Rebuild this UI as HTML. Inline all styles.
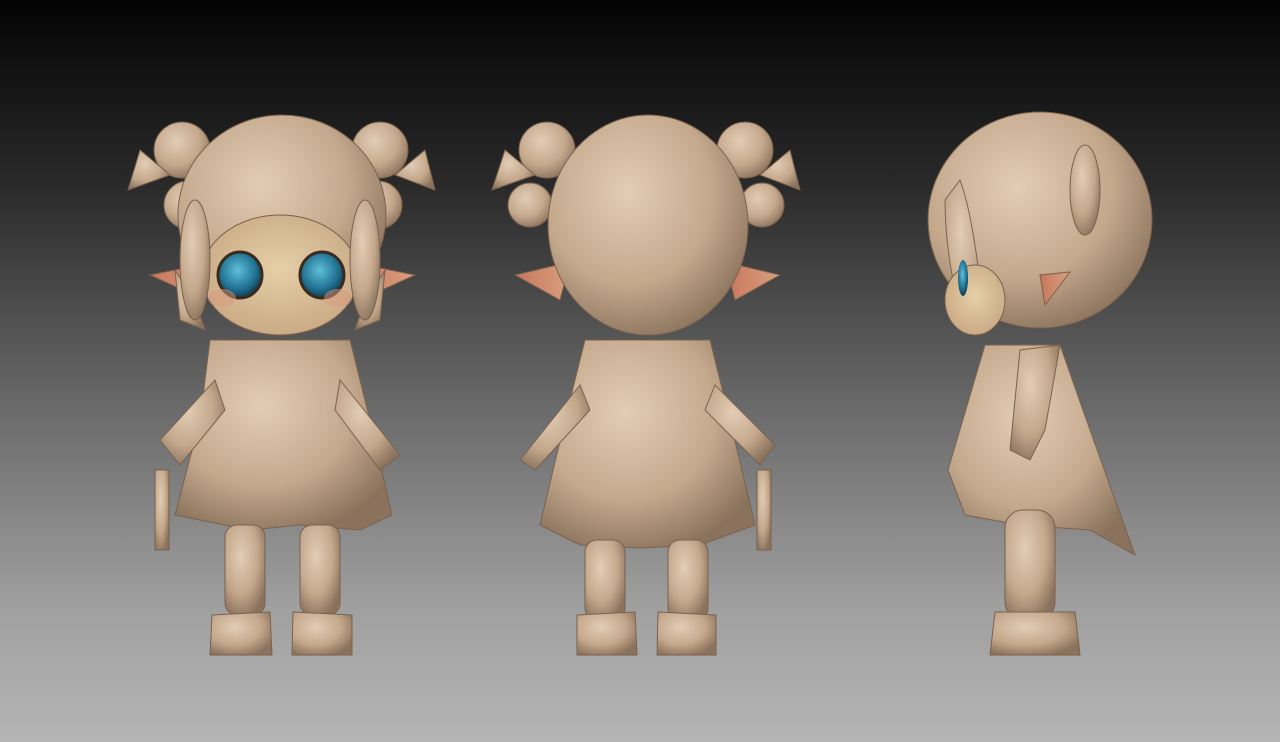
<!DOCTYPE html>
<html><head><meta charset="utf-8"><style>
html,body{margin:0;padding:0;width:1280px;height:742px;overflow:hidden}
body{background:linear-gradient(#030303 0%,#2a2a2a 25%,#6a6a6a 55%,#a0a0a0 82%,#b4b4b4 100%)}
svg{position:absolute;left:0;top:0}
</style></head><body>
<svg width="1280" height="742" viewBox="0 0 1280 742">
<defs>
<radialGradient id="sk" cx="40%" cy="35%" r="70%"><stop offset="0" stop-color="#e2cdb5"/><stop offset=".6" stop-color="#c4a88c"/><stop offset="1" stop-color="#8a725c"/></radialGradient>
<radialGradient id="face" cx="50%" cy="45%" r="60%"><stop offset="0" stop-color="#e6cfa8"/><stop offset="1" stop-color="#c7a882"/></radialGradient>
<radialGradient id="eye" cx="45%" cy="40%" r="60%"><stop offset="0" stop-color="#5fc0d8"/><stop offset=".7" stop-color="#1f6f90"/><stop offset="1" stop-color="#123b4c"/></radialGradient>
<linearGradient id="ear" x1="0" x2="1"><stop offset="0" stop-color="#c8765a"/><stop offset="1" stop-color="#d9a080"/></linearGradient>
</defs>
<g fill="url(#sk)" stroke="#7a624e" stroke-width="1">
<!-- FRONT -->
<circle cx="182" cy="150" r="28"/><circle cx="188" cy="205" r="24"/>
<circle cx="380" cy="150" r="28"/><circle cx="378" cy="205" r="24"/>
<path d="M128 190 L170 175 L140 150 Z"/><path d="M435 190 L395 175 L425 150 Z"/>
<ellipse cx="282" cy="215" rx="104" ry="100"/>
<path d="M150 275 L215 262 L205 300 Z" fill="url(#ear)"/>
<path d="M415 275 L350 262 L360 300 Z" fill="url(#ear)"/>
<ellipse cx="280" cy="275" rx="78" ry="60" fill="url(#face)"/>
<path d="M175 270 Q200 310 205 330 L180 320 Z"/><path d="M385 270 Q360 310 355 330 L380 320 Z"/>
<ellipse cx="195" cy="260" rx="15" ry="60"/><ellipse cx="365" cy="260" rx="15" ry="60"/>
<path d="M210 340 L350 340 L370 420 L392 515 L360 530 L300 525 L250 530 L175 515 L200 420 Z"/>
<path d="M160 440 L215 380 L225 410 L180 465 Z"/><path d="M400 455 L340 380 L335 410 L380 470 Z"/>
<rect x="155" y="470" width="14" height="80"/>
<rect x="225" y="525" width="40" height="90" rx="12"/><rect x="300" y="525" width="40" height="90" rx="12"/>
<path d="M212 615 L270 612 L272 655 L210 655 Z"/><path d="M293 612 L352 615 L352 655 L292 655 Z"/>
<!-- BACK -->
<circle cx="547" cy="150" r="28"/><circle cx="530" cy="205" r="22"/>
<circle cx="745" cy="150" r="28"/><circle cx="762" cy="205" r="22"/>
<path d="M492 190 L535 175 L505 150 Z"/><path d="M800 190 L760 175 L790 150 Z"/>
<path d="M515 275 L570 262 L560 300 Z" fill="url(#ear)"/>
<path d="M780 275 L725 262 L735 300 Z" fill="url(#ear)"/>
<ellipse cx="648" cy="225" rx="100" ry="110"/>
<path d="M585 340 L710 340 L730 420 L755 525 L700 545 L640 548 L580 545 L540 525 L565 420 Z"/>
<path d="M520 460 L580 385 L590 410 L535 470 Z"/><path d="M775 445 L715 385 L705 410 L760 465 Z"/>
<rect x="757" y="470" width="14" height="80"/>
<rect x="585" y="540" width="40" height="80" rx="12"/><rect x="668" y="540" width="40" height="80" rx="12"/>
<path d="M577 615 L635 612 L637 655 L577 655 Z"/><path d="M658 612 L716 615 L716 655 L657 655 Z"/>
<!-- SIDE -->
<ellipse cx="1040" cy="220" rx="112" ry="108"/>
<path d="M960 180 Q975 220 985 330 L965 330 Q945 260 945 200 Z"/>
<ellipse cx="1085" cy="190" rx="15" ry="45"/>
<path d="M1070 272 L1040 275 L1045 305 Z" fill="url(#ear)"/>
<ellipse cx="975" cy="300" rx="30" ry="35" fill="url(#face)"/>
<path d="M985 345 L1060 345 L1090 430 L1135 555 L1090 530 L1020 525 L965 515 L948 470 Z"/>
<path d="M1020 350 L1060 345 L1045 430 L1030 460 L1010 450 Z"/>
<rect x="1005" y="510" width="50" height="110" rx="18"/>
<path d="M995 612 L1075 612 L1080 655 L990 655 Z"/>
</g>
<g>
<ellipse cx="240" cy="275" rx="22" ry="23" fill="url(#eye)" stroke="#3a2a20" stroke-width="3"/>
<ellipse cx="322" cy="275" rx="22" ry="23" fill="url(#eye)" stroke="#3a2a20" stroke-width="3"/>
<ellipse cx="963" cy="278" rx="5" ry="18" fill="url(#eye)"/>
<ellipse cx="222" cy="298" rx="14" ry="9" fill="#d99a80" opacity=".5"/>
<ellipse cx="338" cy="298" rx="14" ry="9" fill="#d99a80" opacity=".5"/>
</g>
</svg>
</body></html>
